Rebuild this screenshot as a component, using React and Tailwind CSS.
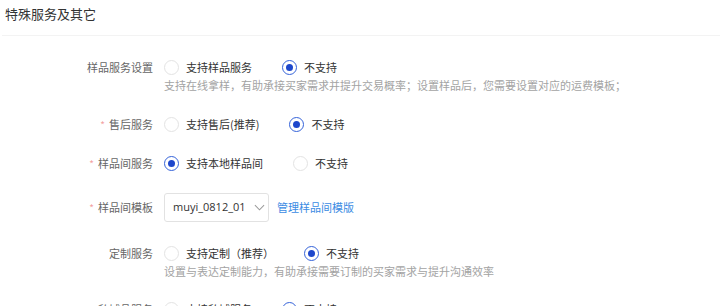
import React from "react";

const CJK = { fontFamily: '"Noto Sans CJK SC", "Noto Sans", sans-serif' };

function Radio({ checked }) {
  return checked ? (
    <span className="flex h-[15px] w-[15px] shrink-0 items-center justify-center rounded-full border border-[#3563d9] bg-white">
      <span className="h-[7px] w-[7px] rounded-full bg-[#1d47cc]" />
    </span>
  ) : (
    <span className="h-[15px] w-[15px] shrink-0 rounded-full border border-[#e3e3e3] bg-white" />
  );
}

function Option({ checked, children }) {
  return (
    <label className="mr-[30px] flex items-center">
      <Radio checked={checked} />
      <span className="ml-[7px] text-[11px] leading-[20px] text-[#333]">{children}</span>
    </label>
  );
}

function Label({ required, children }) {
  return (
    <div className="flex h-[20px] w-[164px] shrink-0 items-center justify-end pr-[11px] text-[11px] text-[#666]">
      {required && <span className="mr-[4px] text-[10px] text-[#f3a3a3]">*</span>}
      {children}
    </div>
  );
}

function Help({ children }) {
  return <div className="text-[11px] leading-[16px] text-[#a3a3a3]">{children}</div>;
}

export default function App() {
  return (
    <div className="h-[306px] w-[720px] overflow-hidden bg-white" style={CJK}>
      <div className="ml-[2px] h-[36px] border-b border-[#f3f3f3] pl-[3px] pt-[4px] text-[13px] leading-[20px] text-[#333]">
        特殊服务及其它
      </div>

      <div className="pt-[21px]">
        <div className="flex">
          <Label>样品服务设置</Label>
          <div>
            <div className="flex h-[20px] items-center">
              <Option>支持样品服务</Option>
              <Option checked>不支持</Option>
            </div>
            <Help>支持在线拿样，有助承接买家需求并提升交易概率；设置样品后，您需要设置对应的运费模板；</Help>
          </div>
        </div>

        <div className="mt-[21px] flex">
          <Label required>售后服务</Label>
          <div className="flex h-[20px] items-center">
            <Option>支持售后(推荐)</Option>
            <Option checked>不支持</Option>
          </div>
        </div>

        <div className="mt-[19px] flex">
          <Label required>样品间服务</Label>
          <div className="flex h-[20px] items-center">
            <Option checked>支持本地样品间</Option>
            <Option>不支持</Option>
          </div>
        </div>

        <div className="mt-[20px] flex items-center">
          <Label required>样品间模板</Label>
          <div className="flex items-center">
            <div className="flex h-[29px] w-[105px] items-center rounded-[3px] border border-[#e2e2e2] pl-[8px]">
              <span
                className="text-[11px] text-[#333]"
                style={{ fontFamily: '"Open Sans", "Noto Sans", sans-serif' }}
              >
                muyi_0812_01
              </span>
              <svg className="ml-[8px]" width="11" height="11" viewBox="0 0 12 12" fill="none">
                <path d="M1 3.5l5 5 5-5" stroke="#9a9a9a" strokeWidth="1.1" />
              </svg>
            </div>
            <span className="ml-[8px] text-[11px] text-[#3b8be3]">管理样品间模版</span>
          </div>
        </div>

        <div className="mt-[21px] flex">
          <Label>定制服务</Label>
          <div>
            <div className="flex h-[20px] items-center">
              <Option>支持定制（推荐）</Option>
              <Option checked>不支持</Option>
            </div>
            <Help>设置与表达定制能力，有助承接需要订制的买家需求与提升沟通效率</Help>
          </div>
        </div>

        <div className="mt-[20px] flex">
          <Label>私域品服务</Label>
          <div className="flex h-[20px] items-center">
            <Option>支持私域服务</Option>
            <Option checked>不支持</Option>
          </div>
        </div>
      </div>
    </div>
  );
}
